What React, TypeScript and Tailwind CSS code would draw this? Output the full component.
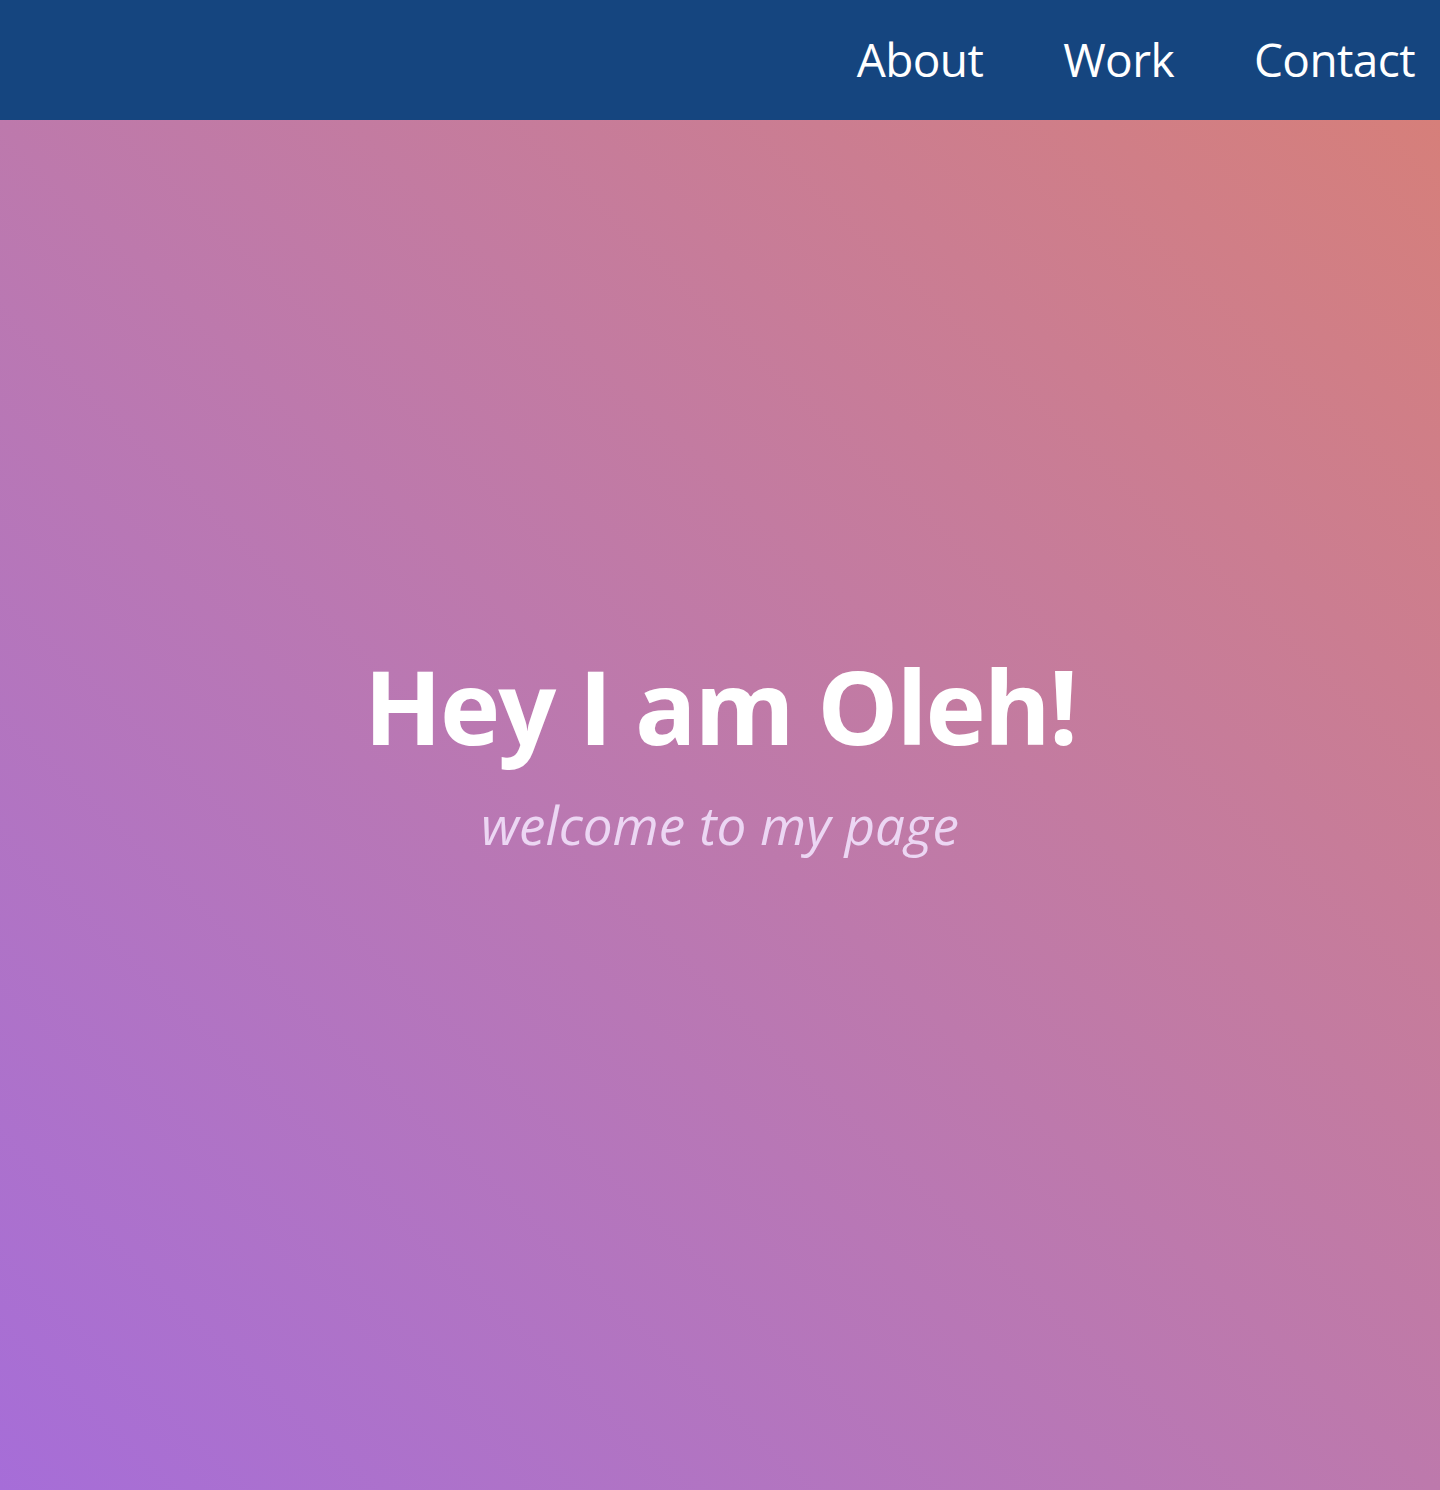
import React from 'react';

const links = ['About', 'Work', 'Contact'];

const App: React.FC = () => {
  return (
    <div className="min-h-[1490px] flex flex-col font-['Open_Sans',sans-serif]">
      <header className="h-[120px] bg-[#15457f] flex items-center justify-end pr-[25px]">
        <nav className="flex gap-[80px] -mt-[3px]">
          {links.map((link) => (
            <a key={link} href="#" className="text-white text-[46px] leading-none tracking-[-0.6px]">
              {link}
            </a>
          ))}
        </nav>
      </header>
      <main className="flex-1 flex flex-col items-center justify-center bg-linear-to-tr from-[#a66dd8] to-[#d67f7a] pb-[104px]">
        <h1 className="text-white font-bold text-[102px] leading-none tracking-[-2px]">Hey I am Oleh!</h1>
        <p className="mt-[41px] italic text-[#ecd6f3] text-[53px] leading-none">welcome to my page</p>
      </main>
    </div>
  );
};

export default App;
